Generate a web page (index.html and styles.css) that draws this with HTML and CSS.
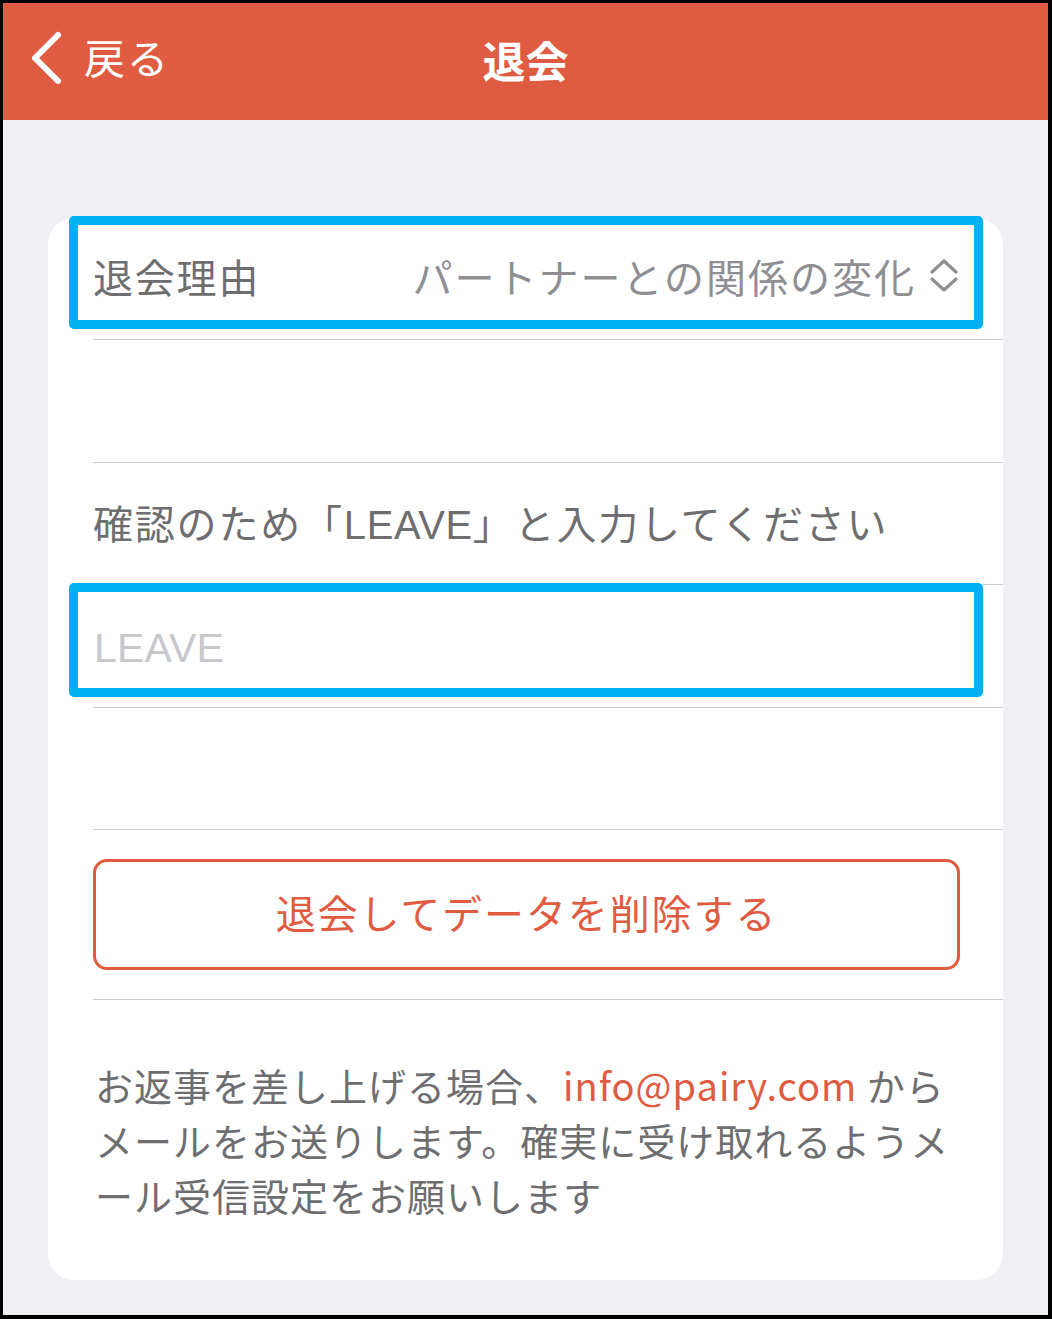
FILE: index.html
```html
<!DOCTYPE html>
<html lang="ja">
<head>
<meta charset="utf-8">
<title>退会</title>
<link rel="stylesheet" href="styles.css">
</head>
<body>
<div class="frame">
  <header class="navbar">
    <div class="back">
      <svg class="back-icon" width="40" height="56" viewBox="0 0 40 56"><path d="M31 5 L8 28 L31 51" fill="none" stroke="#fff" stroke-width="6" stroke-linecap="round" stroke-linejoin="round"/></svg>
      <span class="back-label">戻る</span>
    </div>
    <h1 class="title">退会</h1>
  </header>
  <main class="content">
    <section class="card">
      <div class="row row-select">
        <span class="label">退会理由</span>
        <span class="value">パートナーとの関係の変化</span>
        <svg class="updown" width="30" height="36" viewBox="0 0 30 36"><path d="M3 14 L15 3 L27 14 M3 21 L15 32 L27 21" fill="none" stroke="#8e8e93" stroke-width="3.2" stroke-linecap="round" stroke-linejoin="round"/></svg>
        <div class="highlight"></div>
      </div>
      <div class="row"></div>
      <div class="row row-confirm"><span class="label">確認のため「<span class="latin">LEAVE</span>」と入力してください</span></div>
      <div class="row row-input">
        <span class="placeholder">LEAVE</span>
        <div class="highlight"></div>
      </div>
      <div class="row"></div>
      <div class="row row-button">
        <button class="delete-btn">退会してデータを削除する</button>
      </div>
      <p class="note">お返事を差し上げる場合、<span class="mail">info@pairy.com</span> から<br>メールをお送りします。確実に受け取れるようメ<br>ール受信設定をお願いします</p>
    </section>
  </main>
</div>
</body>
</html>
```

FILE: styles.css
```css
* { box-sizing: border-box; }
html, body { margin: 0; padding: 0; }
body {
  width: 1052px;
  height: 1319px;
  font-family: "Noto Sans CJK JP", "Noto Sans", sans-serif;
  background: #000;
}
.frame {
  width: 1052px;
  height: 1319px;
  border-style: solid;
  border-color: #000;
  border-width: 3px 4px 4px 3px;
  background: #f0eff4;
  display: flex;
  flex-direction: column;
  overflow: hidden;
}
.navbar {
  height: 117px;
  flex: 0 0 117px;
  background: #df5b41;
  position: relative;
  display: flex;
  align-items: center;
  justify-content: center;
  padding-bottom: 4px;
}
.back {
  position: absolute;
  left: 24px;
  top: 27px;
  display: flex;
  align-items: center;
  gap: 17px;
}
.back-icon { display: block; }
.back-label {
  color: #fff;
  font-size: 41px;
  line-height: 56px;
  letter-spacing: 2px;
  margin-top: -4px;
}
.title {
  margin: 0;
  color: #fff;
  font-size: 43px;
  font-weight: 700;
  line-height: 1;
}
.content {
  flex: 1;
  padding: 98px 45px 35px 45px;
}
.card {
  background: #fff;
  border-radius: 26px;
  height: 1062px;
  display: flex;
  flex-direction: column;
}
.row {
  position: relative;
  height: 122.4px;
  flex: 0 0 122.4px;
  margin-left: 45px;
  padding-right: 46px;
  padding-bottom: 5px;
  border-bottom: 1px solid #cfced3;
  display: flex;
  align-items: center;
}
.label {
  color: #6e6e70;
  font-size: 40px;
  letter-spacing: 1.8px;
  line-height: 1;
}
.row-confirm { padding-bottom: 0; }
.latin {
  font-family: "Liberation Sans", sans-serif;
  letter-spacing: 0.6px;
}
.row-select .value {
  margin-left: auto;
  color: #8e8e93;
  font-size: 40px;
  letter-spacing: 2px;
  line-height: 1;
}
.updown {
  margin-left: 13px;
  margin-right: -2px;
  display: block;
}
.row-input { padding-bottom: 0; padding-top: 6px; }
.placeholder {
  color: #c7c7cc;
  font-family: "Liberation Sans", sans-serif;
  font-size: 41px;
  line-height: 1;
  padding-left: 1px;
  letter-spacing: 0.2px;
}
.highlight {
  position: absolute;
  left: -24px;
  right: 20px;
  top: -2px;
  height: 113px;
  border: 9px solid #00b0f0;
  border-radius: 5px;
  pointer-events: none;
}
.row-input .highlight { top: -2px; height: 114px; }
.row-button {
  height: 170px;
  flex: 0 0 170px;
  padding-right: 43px;
  padding-bottom: 0;
  align-items: center;
}
.delete-btn {
  width: 100%;
  height: 111px;
  background: #fff;
  border: 3px solid #df5b41;
  border-radius: 14px;
  color: #df5b41;
  font-family: "Noto Sans CJK JP", "Noto Sans", sans-serif;
  font-size: 40px;
  letter-spacing: 1.9px;
  padding: 0 0 5px 0;
}
.note {
  margin: 0;
  padding: 57px 0 0 47px;
  color: #6e6e70;
  font-size: 38px;
  line-height: 55px;
  letter-spacing: 1px;
  white-space: nowrap;
}
.mail { color: #df5b41; letter-spacing: 1px; }
```
